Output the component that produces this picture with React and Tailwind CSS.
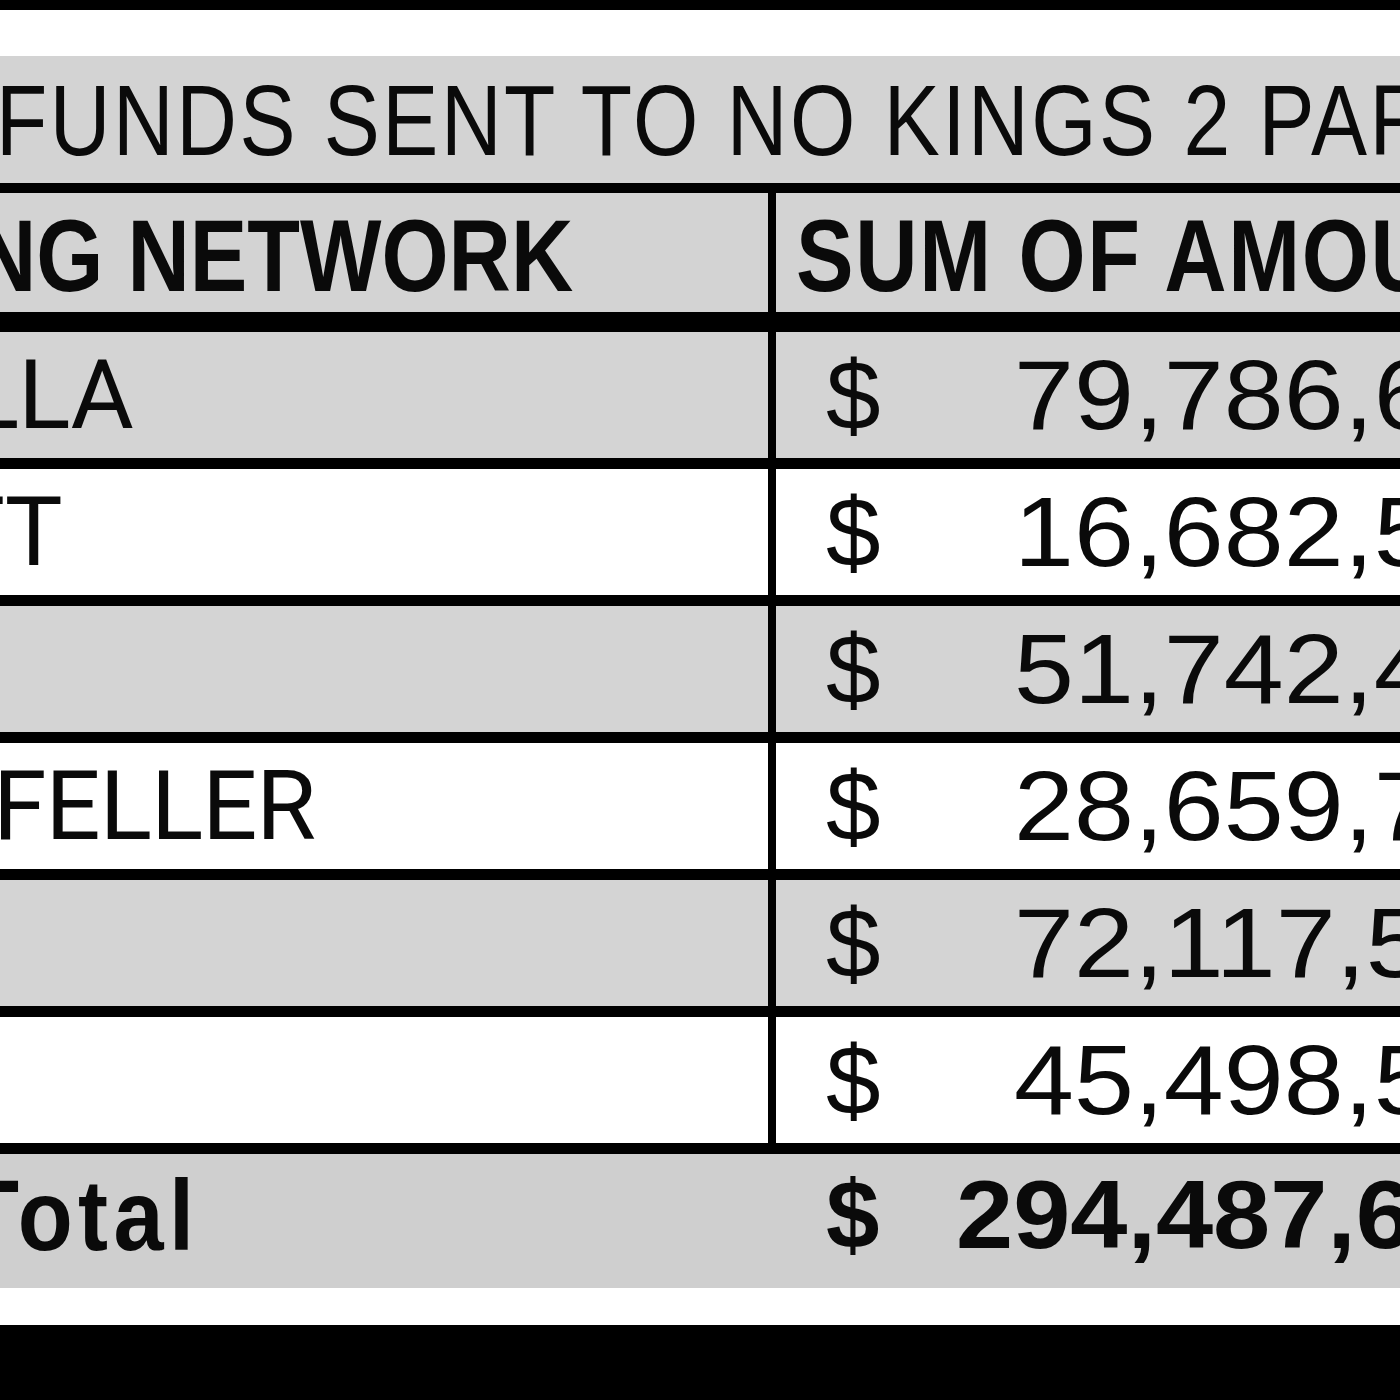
import React from "react";

const rows = [
  { label: "LLA", ml: "-ml-[33px]", amount: "79,786,6", bg: "bg-[#d4d4d4]" },
  { label: "TT", ml: "-ml-[53px]", amount: "16,682,5", bg: "bg-white" },
  { label: "", ml: "", amount: "51,742,4", bg: "bg-[#d4d4d4]" },
  { label: "FELLER", ml: "-ml-[7px]", amount: "28,659,7", bg: "bg-white" },
  { label: "", ml: "", amount: "72,117,5", bg: "bg-[#d4d4d4]" },
  { label: "", ml: "", amount: "45,498,5", bg: "bg-white" },
];

export default function App() {
  return (
    <div className="w-[1400px] h-[1400px] overflow-hidden bg-white flex flex-col text-[#0a0a0a]">
      <div className="h-[10px] bg-black shrink-0" />
      <div className="h-[46px] bg-white shrink-0" />
      <div className="h-[127px] shrink-0 bg-[#d3d3d3] flex items-center overflow-hidden whitespace-nowrap">
        <span className="font-['Liberation_Sans',sans-serif] text-[100px] leading-none tracking-[3px] ml-[-4px] inline-block origin-left scale-x-[0.84]">
          FUNDS SENT TO NO KINGS 2 PAR
        </span>
      </div>
      <div className="h-[10px] bg-black shrink-0" />
      <div className="h-[119px] shrink-0 flex bg-[#d3d3d3]">
        <div className="w-[768px] flex items-center overflow-hidden whitespace-nowrap pt-[7px]">
          <span className="font-['Liberation_Sans',sans-serif] font-bold text-[102px] leading-none -ml-[26px] inline-block origin-left scale-x-[0.846]">
            NG NETWORK
          </span>
        </div>
        <div className="w-[8px] bg-black" />
        <div className="flex-1 flex items-center overflow-hidden whitespace-nowrap pl-[20px] pt-[7px]">
          <span className="font-['Liberation_Sans',sans-serif] font-bold text-[102px] leading-none tracking-[2px] inline-block origin-left scale-x-[0.846]">
            SUM OF AMOU
          </span>
        </div>
      </div>
      <div className="h-[20px] bg-black shrink-0" />
      {rows.map((r, i) => (
        <React.Fragment key={i}>
          <div className={`h-[126px] shrink-0 flex ${r.bg}`}>
            <div className="w-[768px] flex items-center overflow-hidden whitespace-nowrap">
              <span className={`font-['Roboto',sans-serif] text-[97px] leading-none tracking-[-1px] ${r.ml}`}>{r.label}</span>
            </div>
            <div className="w-[8px] bg-black" />
            <div className="flex-1 flex items-center overflow-hidden whitespace-nowrap pl-[50px]">
              <span className="font-['Liberation_Sans',sans-serif] text-[98px] leading-none">$</span>
              <span className="font-['Liberation_Sans',sans-serif] text-[98px] leading-none ml-[133px] inline-block origin-left scale-x-110">
                {r.amount}
              </span>
            </div>
          </div>
          <div className="h-[11px] bg-black shrink-0" />
        </React.Fragment>
      ))}
      <div className="h-[134px] shrink-0 flex bg-[#cfcfcf]">
        <div className="w-[776px] flex items-center overflow-hidden whitespace-nowrap pb-[12px]">
          <span className="font-['Liberation_Sans',sans-serif] font-bold text-[100px] leading-none tracking-[6px] -ml-[36px] inline-block origin-left scale-x-90">
            Total
          </span>
        </div>
        <div className="flex-1 flex items-center overflow-hidden whitespace-nowrap pl-[50px] pb-[12px]">
          <span className="font-['Liberation_Sans',sans-serif] font-bold text-[96px] leading-none">$</span>
          <span className="font-['Liberation_Sans',sans-serif] font-bold text-[96px] leading-none ml-[77px] inline-block origin-left scale-x-107">
            294,487,6
          </span>
        </div>
      </div>
      <div className="h-[37px] bg-white shrink-0" />
      <div className="flex-1 bg-black" />
    </div>
  );
}
